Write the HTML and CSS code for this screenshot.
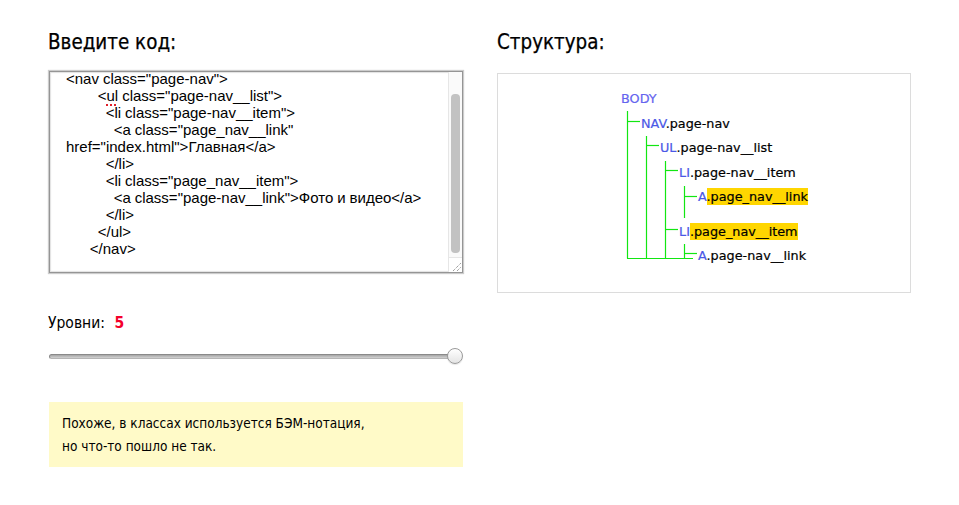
FILE: index.html
```html
<!DOCTYPE html>
<html lang="ru">
<head>
<meta charset="utf-8">
<title>БЭМ</title>
<link rel="stylesheet" href="styles.css">
</head>
<body>
<div class="page">
  <section class="col col-left">
    <h2 class="title">Введите код:</h2>
    <div class="editor">
      <div class="code"><pre class="code-text">&lt;nav class="page-nav"&gt;
        &lt;<span class="typo">ul</span> class="page-nav__list"&gt;
          &lt;li class="page-nav__item"&gt;
            &lt;a class="page_nav__link" href="index.html"&gt;Главная&lt;/a&gt;
          &lt;/li&gt;
          &lt;li class="page_nav__item"&gt;
            &lt;a class="page-nav__link"&gt;Фото и видео&lt;/a&gt;
          &lt;/li&gt;
        &lt;/ul&gt;
      &lt;/nav&gt;</pre></div>
      <div class="scrollbar">
        <div class="thumb"></div>
        <div class="grip">
          <svg width="13" height="13" viewBox="0 0 13 13"><path d="M4 12 L12 4 M8 12 L12 8" stroke="#777" stroke-width="1" stroke-dasharray="1 1" fill="none"/></svg>
        </div>
      </div>
    </div>
    <div class="levels">Уровни: <b class="levels-num">5</b></div>
    <div class="slider">
      <div class="slider-track"></div>
      <div class="slider-thumb"></div>
    </div>
    <div class="notice">Похоже, в классах используется БЭМ-нотация,<br>но что-то пошло не так.</div>
  </section>
  <section class="col col-right">
    <h2 class="title title-right">Структура:</h2>
    <div class="tree">
      <svg class="tree-lines" width="412" height="218" viewBox="0 0 412 218">
        <g stroke="#12e612" stroke-width="1.2" fill="none">
          <path d="M129.5 37 V184.5"/>
          <path d="M129 47.5 H142"/>
          <path d="M148.5 62 V184.5"/>
          <path d="M148 71.5 H161"/>
          <path d="M167.5 87 V184.5"/>
          <path d="M167 96.5 H180"/>
          <path d="M186.5 112 V144"/>
          <path d="M186 122.5 H199"/>
          <path d="M167 155.5 H180"/>
          <path d="M186.5 170 V184.5"/>
          <path d="M186 179.5 H199"/>
          <path d="M129 184.5 H195"/>
        </g>
      </svg>
      <div class="node lvl0"><span class="tag tag-body">BODY</span></div>
      <div class="node lvl1"><span class="tag">NAV</span>.page-nav</div>
      <div class="node lvl2"><span class="tag">UL</span>.page-nav__list</div>
      <div class="node lvl3"><span class="tag">LI</span>.page-nav__item</div>
      <div class="node lvl4 gap-after"><span class="tag">A</span><span class="mark">.page_nav__link</span></div>
      <div class="node lvl3"><span class="tag">LI</span><span class="mark">.page_nav__item </span></div>
      <div class="node lvl4"><span class="tag">A</span>.page-nav__link</div>
    </div>
  </section>
</div>
</body>
</html>
```
FILE: styles.css
```css
* { box-sizing: border-box; }

body {
  margin: 0;
  background: #fff;
  color: #000;
  font-family: "DejaVu Sans Condensed", "DejaVu Sans", sans-serif;
}

.page {
  display: flex;
  gap: 33px;
  padding: 30px 0 0 48px;
}

.col-left { width: 416px; }
.col-right { width: 414px; }

.title {
  margin: 0;
  font-size: 20.4px;
  line-height: 24px;
  font-weight: normal;
  color: #000;
  -webkit-text-stroke: 0.25px #000;
}

/* editor (textarea look) */
.editor {
  margin: 17px 1px 0 1px;
  height: 202px;
  display: flex;
  border: 1px solid #959595;
  box-shadow: 0 0 1px 1px rgba(0,0,0,0.2), inset 0 0 1px 1px rgba(0,0,0,0.12);
  background: #fff;
}

.code {
  flex: 1;
  overflow: hidden;
  padding-left: 16px;
}

.code-text {
  margin: -2px 0 0 0;
  font-family: "Liberation Sans", Arial, sans-serif;
  font-size: 15px;
  line-height: 17px;
  word-spacing: -0.2px;
  white-space: pre-wrap;
  color: #000;
}

.typo {
  text-decoration: underline dotted #e0202a;
  text-decoration-thickness: 2px;
  text-underline-offset: 3px;
}

.scrollbar {
  width: 14px;
  display: flex;
  flex-direction: column;
  background: #fafafa;
  border-left: 1px solid #e6e6e6;
}

.thumb {
  margin: 22px 2px 0 2px;
  height: 159px;
  border-radius: 4px;
  background: #c2c2c2;
}

.grip {
  margin-top: auto;
  height: 15px;
  border-top: 1px solid #e6e6e6;
  background: #fff;
  display: flex;
  align-items: flex-end;
  justify-content: flex-end;
}

/* levels */
.levels {
  margin-top: 40px;
  font-size: 15.5px;
  line-height: 20px;
  color: #000;
}

.levels-num {
  margin-left: 5px;
  color: #f4002b;
  font-weight: bold;
}

.slider {
  margin: 15px 0 0 1px;
  width: 414px;
  height: 16px;
  display: flex;
  align-items: center;
}

.slider-track {
  flex: 1;
  height: 5px;
  border-radius: 3px;
  border: 1px solid #8a8a8a;
  border-bottom-color: #b5b5b5;
  background: linear-gradient(#a6a6a6, #d2d2d2);
}

.slider-thumb {
  width: 16px;
  height: 16px;
  margin-left: -8px;
  border-radius: 50%;
  border: 1px solid #9a9a9a;
  background: linear-gradient(#ffffff, #e4e4e4);
  box-shadow: 0 1px 1px rgba(0,0,0,0.1);
}

.notice {
  margin: 38px 1px 0 1px;
  padding: 9.5px 13px;
  background: #fffac8;
  font-size: 13.5px;
  line-height: 23px;
  color: #000;
}

/* structure tree */
.title-right { margin-bottom: 19px; }

.tree {
  position: relative;
  height: 220px;
  border: 1px solid #dcdcdc;
  padding-top: 13px;
  font-family: "DejaVu Sans", sans-serif;
  font-size: 12.8px;
  color: #000;
  -webkit-text-stroke: 0.2px currentColor;
}

.tree-lines {
  position: absolute;
  top: 0;
  left: 0;
}

.node {
  height: 24.5px;
  line-height: 24.5px;
  white-space: nowrap;
}

.lvl0 { padding-left: 123px; }
.lvl1 { padding-left: 143px; }
.lvl2 { padding-left: 162px; }
.lvl3 { padding-left: 181px; }
.lvl4 { padding-left: 200px; }

.gap-after { margin-bottom: 10px; }

.tag { color: #4b58e6; }
.tag-body { color: #6464ef; }

.mark {
  background: #ffd600;
  padding: 1px 0;
}
```
